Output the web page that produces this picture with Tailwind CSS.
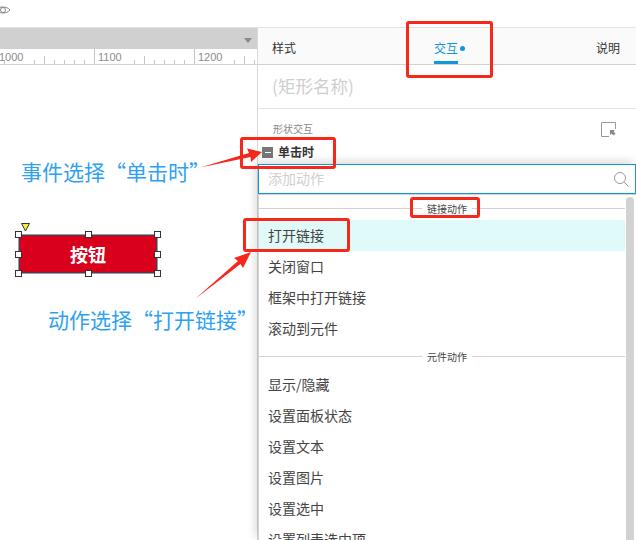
<!DOCTYPE html>
<html lang="zh-CN">
<head>
<meta charset="utf-8">
<script src="https://cdn.jsdelivr.net/npm/@tailwindcss/browser@4"></script>
</head>
<body class="bg-white">
<div class="relative flex h-[540px] w-[636px] flex-col overflow-hidden bg-white font-['Noto_Sans_CJK_SC','Liberation_Sans',sans-serif] text-[#333]">
  <!-- top bar -->
  <div class="flex h-[28px] shrink-0 items-start border-b border-[#e2e2e2] pt-[3px]">
    <svg class="ml-[-5px]" width="16" height="14" viewBox="0 0 16 14" fill="none" stroke="#888" stroke-width="1"><path d="M1 7C4 3 12 3 15 7C12 11 4 11 1 7Z"/><circle cx="8" cy="7" r="2.5"/></svg>
  </div>
  <div class="flex min-h-0 flex-1">
    <!-- canvas -->
    <div class="relative flex w-[258px] shrink-0 flex-col border-r border-[#d9d9d9]">
      <div class="flex h-[21px] shrink-0 items-center justify-end bg-[#d0d0d0] pr-[5px] pt-[4px]">
        <div class="h-0 w-0 border-x-[4px] border-t-[5px] border-x-transparent border-t-[#8a8a8a]"></div>
      </div>
      <div class="relative h-[16px] shrink-0 border-b border-[#d2d2d2] font-['Liberation_Sans',sans-serif] text-[11px] leading-[14px] text-[#8c8c8c]">
        <svg class="absolute left-0 top-0" width="258" height="15" stroke="#c4c4c4" stroke-width="1">
          <path d="M94.5 0V15M194.5 0V15M4.500 11V15M34.500 11V15M44.500 7V15M54.500 11V15M64.500 11V15M74.500 11V15M84.500 11V15M134.500 11V15M144.500 7V15M154.500 11V15M164.500 11V15M174.500 11V15M184.500 11V15M234.500 11V15M244.500 7V15M254.500 11V15"/>
        </svg>
        <span class="absolute left-[-1px] top-[1px]">1000</span>
        <span class="absolute left-[98px] top-[1px]">1100</span>
        <span class="absolute left-[198px] top-[1px]">1200</span>
      </div>
      <div class="relative flex-1">
        <!-- selected button -->
        <div class="absolute left-[18px] top-[169px] flex h-[40px] w-[140px] items-center justify-center border border-[#19d3d8] bg-[#d9001b] text-[18px] font-bold text-white">按钮</div>
        <svg class="absolute left-[21px] top-[158px]" width="9" height="9" viewBox="0 0 9 9"><path d="M.5.5H8.500L4.500 8Z" fill="#f4ee42" stroke="#333"/></svg>
        <div class="absolute left-[15px] top-[166px] size-[7px] border border-[#333] bg-white"></div>
        <div class="absolute left-[85px] top-[166px] size-[7px] border border-[#333] bg-white"></div>
        <div class="absolute left-[154px] top-[166px] size-[7px] border border-[#333] bg-white"></div>
        <div class="absolute left-[15px] top-[186px] size-[7px] border border-[#333] bg-white"></div>
        <div class="absolute left-[154px] top-[186px] size-[7px] border border-[#333] bg-white"></div>
        <div class="absolute left-[15px] top-[205px] size-[7px] border border-[#333] bg-white"></div>
        <div class="absolute left-[85px] top-[205px] size-[7px] border border-[#333] bg-white"></div>
        <div class="absolute left-[154px] top-[205px] size-[7px] border border-[#333] bg-white"></div>
      </div>
    </div>
    <!-- right panel -->
    <div class="relative flex min-w-0 flex-1 flex-col">
      <div class="flex h-[37px] shrink-0 items-center justify-between border-b border-[#d2d2d2] bg-[#fafafa] pl-[14px] pr-[16px] pt-[4px] text-[12px]">
        <span>样式</span>
        <span class="relative text-[#1296db]">交互<span class="absolute left-[26px] top-[7px] size-[5px] rounded-full bg-[#1296db]"></span><span class="absolute left-0 top-[22px] h-[3px] w-[24px] bg-[#1296db]"></span></span>
        <span>说明</span>
      </div>
      <div class="flex h-[44px] shrink-0 items-center border-b border-[#e4e4e4] pl-[14px] text-[17.500px] text-[#cfcfcf]">(矩形名称)</div>
      <div class="flex h-[29px] shrink-0 items-end justify-between pl-[15px] pr-[20px] text-[10px] leading-[14px] text-[#888]">
        <span class="pb-[2px]">形状交互</span>
        <svg class="mb-[1px]" width="15" height="15" viewBox="0 0 15 15" fill="none"><path d="M8 14.500H.5V.5H14.500V7" stroke="#999"/><path d="M9 8H14L12.500 9.500L14.500 11.500L12.500 13.500L10.500 11.500L9 13Z" fill="#888"/></svg>
      </div>
      <div class="flex h-[26px] shrink-0 items-center gap-[5px] pl-[4px] pt-[2px] text-[12px] font-bold text-[#333]">
        <span class="flex size-[11px] items-center justify-center bg-[#777]"><span class="h-[1px] w-[6px] bg-white"></span></span>
        <span>单击时</span>
      </div>
      <!-- dropdown -->
      <div class="relative z-10 flex min-h-0 flex-1 flex-col bg-white shadow-[-3px_-3px_8px_rgba(0,0,0,0.14)]">
        <div class="flex h-[30px] shrink-0 items-center justify-between border border-[#1296db] pb-[2px] pl-[9px] pr-[6px] text-[14px] text-[#cfcfcf]">
          <span>添加动作</span>
          <svg class="mt-[2px]" width="15" height="15" viewBox="0 0 15 15" fill="none" stroke="#999" stroke-width="1"><circle cx="6" cy="6" r="5.500"/><path d="M10 10L14.500 14.500"/></svg>
        </div>
        <div class="relative min-h-0 flex-1 overflow-hidden border-l border-t border-[#d2d2d2] pr-[11px] text-[14px] text-[#444]">
          <div class="absolute right-[2px] top-[2px] h-[400px] w-[8px] rounded-[4px] bg-[#d2d2d2]"></div>
          <div class="flex h-[25px] items-center gap-[5px] pt-[1px] text-[10px] text-[#444]"><span class="h-px w-[163px] shrink-0 bg-[#d2d2d2]"></span><span>链接动作</span><span class="h-px flex-1 bg-[#d2d2d2]"></span></div>
          <div class="flex h-[31px] items-center bg-[#e0fafa] pl-[9px]">打开链接</div>
          <div class="flex h-[31px] items-center pl-[9px]">关闭窗口</div>
          <div class="flex h-[31px] items-center pl-[9px]">框架中打开链接</div>
          <div class="flex h-[31px] items-center pl-[9px]">滚动到元件</div>
          <div class="flex h-[25px] items-center gap-[5px] text-[10px] text-[#444]"><span class="h-px w-[163px] shrink-0 bg-[#d2d2d2]"></span><span>元件动作</span><span class="h-px flex-1 bg-[#d2d2d2]"></span></div>
          <div class="flex h-[31px] items-center pl-[9px]">显示/隐藏</div>
          <div class="flex h-[31px] items-center pl-[9px]">设置面板状态</div>
          <div class="flex h-[31px] items-center pl-[9px]">设置文本</div>
          <div class="flex h-[31px] items-center pl-[9px]">设置图片</div>
          <div class="flex h-[31px] items-center pl-[9px]">设置选中</div>
          <div class="flex h-[31px] items-center pl-[9px]">设置列表选中项</div>
        </div>
      </div>
    </div>
  </div>
  <!-- annotations -->
  <div class="absolute left-[21px] top-[156px] z-20 whitespace-nowrap text-[21px] leading-[30px] text-[#2ea1f2]">事件选择“单击时”</div>
  <div class="absolute left-[48px] top-[304px] z-20 whitespace-nowrap text-[21px] leading-[30px] text-[#2ea1f2]">动作选择“打开链接”</div>
  <div class="absolute left-[406px] top-[21px] z-20 h-[57px] w-[87px] rounded-[3px] border-[3px] border-[#f5281c]"></div>
  <div class="absolute left-[240px] top-[137px] z-20 h-[32px] w-[96px] rounded-[3px] border-[3px] border-[#f5281c]"></div>
  <div class="absolute left-[410px] top-[197px] z-20 h-[21px] w-[70px] rounded-[3px] border-[3px] border-[#f5281c]"></div>
  <div class="absolute left-[243px] top-[218px] z-20 h-[34px] w-[107px] rounded-[3px] border-[3px] border-[#f5281c]"></div>
  <svg class="absolute left-0 top-0 z-20" width="636" height="540"><path d="M200 167.500L249 153L247 148.500L262 152L251 162L250.500 157Z" fill="#f5281c"/><path d="M195 299L238 261L234 258L251 252L243 268L240.500 264Z" fill="#f5281c"/></svg>
</div>
</body>
</html>
